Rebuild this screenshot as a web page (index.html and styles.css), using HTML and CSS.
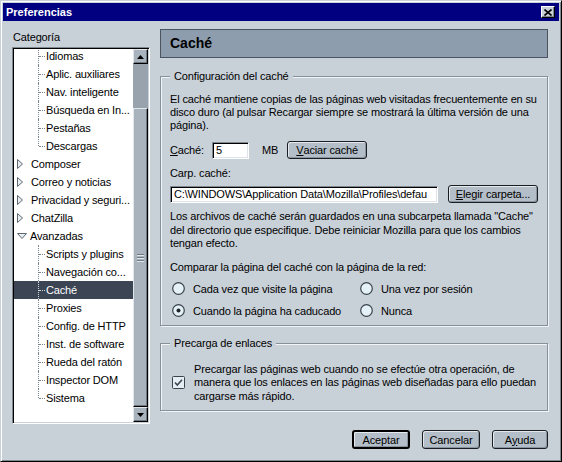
FILE: index.html
```html
<!DOCTYPE html>
<html lang="es">
<head>
<meta charset="utf-8">
<title>Preferencias</title>
<link rel="stylesheet" href="styles.css">
</head>
<body>
<div class="window">
  <div class="titlebar">
    <span class="title">Preferencias</span>
    <span class="close">
      <svg width="8" height="7" viewBox="0 0 8 7"><path d="M0.5 0.5 L7.5 6.5 M7.5 0.5 L0.5 6.5" stroke="#000" stroke-width="1.6" fill="none"/></svg>
    </span>
  </div>
  <div class="content">
    <div class="main">
      <div class="side">
        <div class="side-label">Categoría</div>
        <div class="tree">
          <ul class="rows">
            <li class="row child">Idiomas</li>
            <li class="row child">Aplic. auxiliares</li>
            <li class="row child">Nav. inteligente</li>
            <li class="row child">Búsqueda en In...</li>
            <li class="row child">Pestañas</li>
            <li class="row child last">Descargas</li>
            <li class="row parent"><svg class="tw-closed" width="6" height="10" viewBox="0 0 6 10"><polygon points="0.5,0.5 5.5,5 0.5,9.5" fill="#e9eef3" stroke="#5c6670"/></svg>Composer</li>
            <li class="row parent"><svg class="tw-closed" width="6" height="10" viewBox="0 0 6 10"><polygon points="0.5,0.5 5.5,5 0.5,9.5" fill="#e9eef3" stroke="#5c6670"/></svg>Correo y noticias</li>
            <li class="row parent"><svg class="tw-closed" width="6" height="10" viewBox="0 0 6 10"><polygon points="0.5,0.5 5.5,5 0.5,9.5" fill="#e9eef3" stroke="#5c6670"/></svg>Privacidad y seguri...</li>
            <li class="row parent"><svg class="tw-closed" width="6" height="10" viewBox="0 0 6 10"><polygon points="0.5,0.5 5.5,5 0.5,9.5" fill="#e9eef3" stroke="#5c6670"/></svg>ChatZilla</li>
            <li class="row parent"><svg class="tw-open" width="10" height="6" viewBox="0 0 10 6"><polygon points="0.5,0.5 9.5,0.5 5,5.5" fill="#e9eef3" stroke="#5c6670"/></svg>Avanzadas</li>
            <li class="row child">Scripts y plugins</li>
            <li class="row child">Navegación co...</li>
            <li class="row child sel">Caché</li>
            <li class="row child">Proxies</li>
            <li class="row child">Config. de HTTP</li>
            <li class="row child">Inst. de software</li>
            <li class="row child">Rueda del ratón</li>
            <li class="row child">Inspector DOM</li>
            <li class="row child last">Sistema</li>
          </ul>
          <div class="scrollbar">
            <div class="sb-btn"><svg width="7" height="4" viewBox="0 0 7 4"><polygon points="3.5,0 7,4 0,4" fill="#000"/></svg></div>
            <div class="sb-track"></div>
            <div class="sb-thumb"><span class="grip"></span></div>
            <div class="sb-btn"><svg width="7" height="4" viewBox="0 0 7 4"><polygon points="0,0 7,0 3.5,4" fill="#000"/></svg></div>
          </div>
        </div>
      </div>
      <div class="panel">
        <div class="panel-head">Caché</div>
        <fieldset class="group">
          <legend>Configuración del caché</legend>
          <p class="text">El caché mantiene copias de las páginas web visitadas frecuentemente en su<br>disco duro (al pulsar Recargar siempre se mostrará la última versión de una<br>página).</p>
          <div class="line cache-line">
            <span><u>C</u>aché:</span>
            <span class="field num">5</span>
            <span class="unit">MB</span>
            <button class="btn btn-clear" type="button"><u>V</u>aciar caché</button>
          </div>
          <p class="text folder-label">Carp. caché:</p>
          <div class="line path-line">
            <span class="field path">C:\WINDOWS\Application Data\Mozilla\Profiles\defau</span>
            <button class="btn btn-choose" type="button"><u>E</u>legir carpeta...</button>
          </div>
          <p class="text note">Los archivos de caché serán guardados en una subcarpeta llamada &quot;Cache&quot;<br>del directorio que especifique. Debe reiniciar Mozilla para que los cambios<br>tengan efecto.</p>
          <p class="text compare">Comparar la página del caché con la página de la red:</p>
          <div class="options">
            <div class="opt"><svg width="13" height="13" viewBox="0 0 13 13"><circle cx="6.5" cy="6.5" r="5.8" fill="#e4f1f6" stroke="#3a424c" stroke-width="1.2"/></svg><span>Cada vez que visite la página</span></div>
            <div class="opt"><svg width="13" height="13" viewBox="0 0 13 13"><circle cx="6.5" cy="6.5" r="5.8" fill="#e4f1f6" stroke="#3a424c" stroke-width="1.2"/></svg><span>Una vez por sesión</span></div>
            <div class="opt"><svg width="13" height="13" viewBox="0 0 13 13"><circle cx="6.5" cy="6.5" r="5.8" fill="#e4f1f6" stroke="#3a424c" stroke-width="1.2"/><circle cx="6.5" cy="6.5" r="2" fill="#1e2328"/></svg><span>Cuando la página ha caducado</span></div>
            <div class="opt"><svg width="13" height="13" viewBox="0 0 13 13"><circle cx="6.5" cy="6.5" r="5.8" fill="#e4f1f6" stroke="#3a424c" stroke-width="1.2"/></svg><span>Nunca</span></div>
          </div>
        </fieldset>
        <fieldset class="group group-prefetch">
          <legend>Precarga de enlaces</legend>
          <div class="check-line">
            <svg width="13" height="13" viewBox="0 0 13 13"><rect x="0.5" y="0.5" width="12" height="12" rx="1" fill="#e4eef3" stroke="#3a424c"/><path d="M3 6.5 L5.3 9 L10 3.8" fill="none" stroke="#3c4652" stroke-width="1.6"/></svg>
            <p class="text">Precargar las páginas web cuando no se efectúe otra operación, de<br>manera que los enlaces en las páginas web diseñadas para ello puedan<br>cargarse más rápido.</p>
          </div>
        </fieldset>
      </div>
    </div>
    <div class="actions">
      <button class="btn default" type="button">Aceptar</button>
      <button class="btn" type="button">Cancelar</button>
      <button class="btn btn-help" type="button">A<u>y</u>uda</button>
    </div>
  </div>
</div>
</body>
</html>
```
FILE: styles.css
```css
* { box-sizing: border-box; }
html, body { margin: 0; padding: 0; }
body {
  background: #c8d0d8;
  font-family: "Liberation Sans", Arial, sans-serif;
  font-size: 11px;
  color: #000;
}
.window {
  width: 562px;
  height: 462px;
  border: 1px solid;
  border-color: #c8d0d8 #000 #000 #c8d0d8;
  box-shadow: inset 1px 1px 0 #fff, inset -1px -1px 0 #808890;
  padding: 2px;
  display: flex;
  flex-direction: column;
  background: #c8d0d8;
}
.titlebar {
  height: 18px;
  flex: none;
  background: #000080;
  display: flex;
  align-items: center;
  justify-content: space-between;
  padding: 0 4px 0 3px;
}
.title { color: #fff; font-weight: bold; font-size: 11px; }
.close {
  width: 14px;
  height: 12px;
  background: #c8d0d8;
  border: 1px solid;
  border-color: #fff #000 #000 #fff;
  box-shadow: inset -1px -1px 0 #808890;
  display: flex;
  align-items: center;
  justify-content: center;
}
.content {
  flex: 1;
  display: flex;
  flex-direction: column;
  padding: 8px 11px 10px 9px;
  letter-spacing: -0.15px;
}
.main { display: flex; gap: 10px; height: 395px; flex: none; }
.side { width: 138px; display: flex; flex-direction: column; }
.side-label { line-height: 16px; margin-bottom: 2px; padding-left: 1px; }
.tree {
  flex: 1;
  display: flex;
  background: #fff;
  border: 1px solid;
  border-color: #808890 #fff #fff #808890;
  box-shadow: inset 1px 1px 0 #000, inset -1px -1px 0 #c8d0d8;
  padding: 1px;
  min-height: 0;
}
.rows { flex: 1; list-style: none; margin: 0; padding: 0; overflow: hidden; }
.row {
  height: 18px;
  position: relative;
  white-space: nowrap;
  display: flex;
  align-items: center;
}
.row:first-child { margin-top: -2px; }
.row.child { padding-left: 32px; }
.row.child::before {
  content: "";
  position: absolute;
  left: 24px;
  top: 0;
  bottom: 0;
  border-left: 1px dotted #7c8690;
}
.row.child.last::before { bottom: 9px; }
.row.child::after {
  content: "";
  position: absolute;
  left: 25px;
  top: 9px;
  width: 6px;
  border-top: 1px dotted #7c8690;
}
.row.sel { background: #3b4554; color: #fff; }
.row.sel::before, .row.sel::after { border-color: #d0d8e0; }
.row.parent { padding-left: 3px; }
.tw-closed { margin-right: 8px; flex: none; }
.tw-open { margin-right: 3px; flex: none; }
.scrollbar { width: 15px; flex: none; display: flex; flex-direction: column; }
.sb-btn, .sb-thumb {
  background: #a9b3bd;
  border: 1px solid;
  border-color: #e2e7ec #000 #000 #e2e7ec;
  box-shadow: inset -1px -1px 0 #6f7983;
  display: flex;
  align-items: center;
  justify-content: center;
}
.sb-btn { height: 15px; flex: none; }
.sb-track { height: 44px; flex: none; background: #98a3ae; }
.sb-thumb { flex: 1; }
.grip {
  width: 7px;
  height: 8px;
  background: repeating-linear-gradient(#6f7983 0 1px, #e2e7ec 1px 2px, transparent 2px 3px);
}
.panel { width: 388px; display: flex; flex-direction: column; }
.panel-head {
  height: 29px;
  border: 1px solid #4a5460;
  background: #8d9dad;
  font-weight: bold;
  font-size: 14px;
  line-height: 27px;
  padding-left: 9px;
  letter-spacing: 0;
}
.group {
  margin: 12px 0 0;
  border: 1px solid #86909a;
  box-shadow: inset 1px 1px 0 #f2f5f8, 1px 1px 0 #f2f5f8;
  padding: 10px 8px 5px 9px;
  min-width: 0;
}
.group legend {
  padding: 0 4px;
  line-height: 13px;
  background: #c8d0d8;
}
.text { margin: 0; line-height: 13px; white-space: nowrap; }
.line { display: flex; align-items: center; height: 18px; }
.cache-line { margin-top: 9px; }
.field {
  display: block;
  height: 17px;
  background: #fff;
  border: 1px solid;
  border-color: #808890 #fff #fff #808890;
  box-shadow: inset 1px 1px 0 #000, inset -1px -1px 0 #dfe4ea;
  padding: 0 3px;
  line-height: 15px;
  white-space: nowrap;
  overflow: hidden;
  flex: none;
}
.num { width: 37px; margin-left: 8px; }
.unit { margin-left: 13px; }
.btn {
  height: 18px;
  border: 1px solid #1a1e22;
  border-radius: 3px;
  background: #b4bec8;
  box-shadow: inset 1px 1px 0 #e4e9ee, inset -1px -1px 0 #8a949e;
  font: inherit;
  letter-spacing: inherit;
  color: #000;
  padding: 0;
  display: flex;
  align-items: center;
  justify-content: center;
  flex: none;
}
.btn-clear { width: 80px; margin-left: 9px; }
.folder-label { margin-top: 8px; }
.path-line { margin-top: 5px; }
.path { width: 268px; }
.btn-choose { width: 90px; margin-left: 10px; }
.note { margin-top: 7px; line-height: 13.5px; }
.compare { margin-top: 10px; }
.options {
  display: grid;
  grid-template-columns: 188px auto;
  row-gap: 4px;
  margin-top: 6px;
}
.opt { display: flex; align-items: center; height: 18px; padding-left: 2px; gap: 8px; }
.opt svg { flex: none; }
.group-prefetch { margin-top: 11px; padding: 13px 8px 7px 9px; }
.check-line { display: flex; align-items: center; padding-left: 2px; gap: 9px; }
.check-line svg { flex: none; }
.check-line .text { line-height: 13.5px; }
.actions { display: flex; justify-content: flex-end; gap: 12px; margin-top: 6px; }
.actions .btn { width: 58px; height: 19px; }
.actions .btn-help { width: 56px; }
.btn.default { border: 2px solid #000; }
```
